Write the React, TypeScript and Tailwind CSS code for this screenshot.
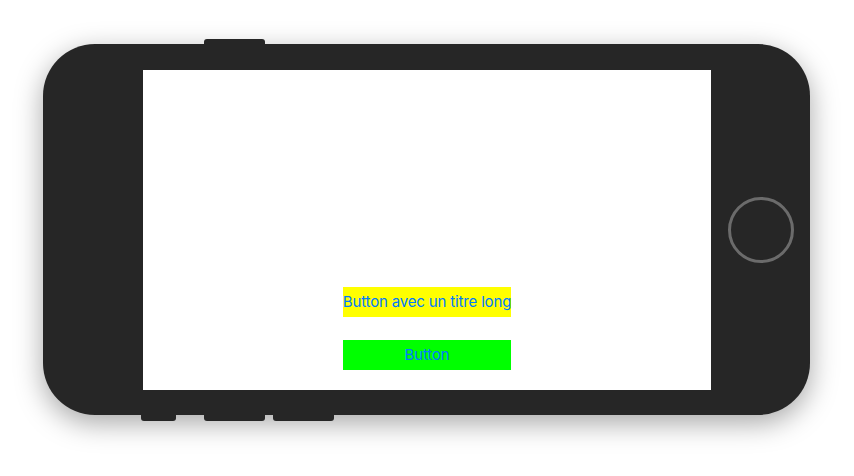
export default function App() {
  return (
    <div className="h-[476px] w-[854px] bg-white pl-[43px] pt-[44px]">
      <div className="relative flex h-[371px] w-[767px] items-center rounded-[52px] bg-[#262626] shadow-[0_8px_28px_rgba(0,0,0,0.35)]">
        {/* hardware buttons */}
        <div className="absolute left-[161px] top-[-5px] h-[6px] w-[61px] rounded-t-[3px] bg-[#262626]" />
        <div className="absolute bottom-[-6px] left-[98px] h-[7px] w-[35px] rounded-b-[3px] bg-[#262626]" />
        <div className="absolute bottom-[-6px] left-[161px] h-[7px] w-[61px] rounded-b-[3px] bg-[#262626]" />
        <div className="absolute bottom-[-6px] left-[230px] h-[7px] w-[61px] rounded-b-[3px] bg-[#262626]" />

        <div className="ml-[100px] flex h-[320px] w-[568px] flex-col items-center justify-end gap-[23px] bg-white pb-[20px] font-['Inter',sans-serif] text-[15px] tracking-[-0.16px] text-[#007aff]">
          <button className="flex h-[30px] w-[168px] items-center justify-center whitespace-nowrap bg-[#ffff00] pt-[2px]">
            Button avec un titre long
          </button>
          <button className="flex h-[30px] w-[168px] items-center justify-center bg-[#00ff00] pt-[2px]">
            Button
          </button>
        </div>

        <div className="flex flex-1 items-center justify-center">
          <div className="h-[66px] w-[66px] rounded-full border-[3px] border-[#6b6b6b]" />
        </div>
      </div>
    </div>
  );
}
